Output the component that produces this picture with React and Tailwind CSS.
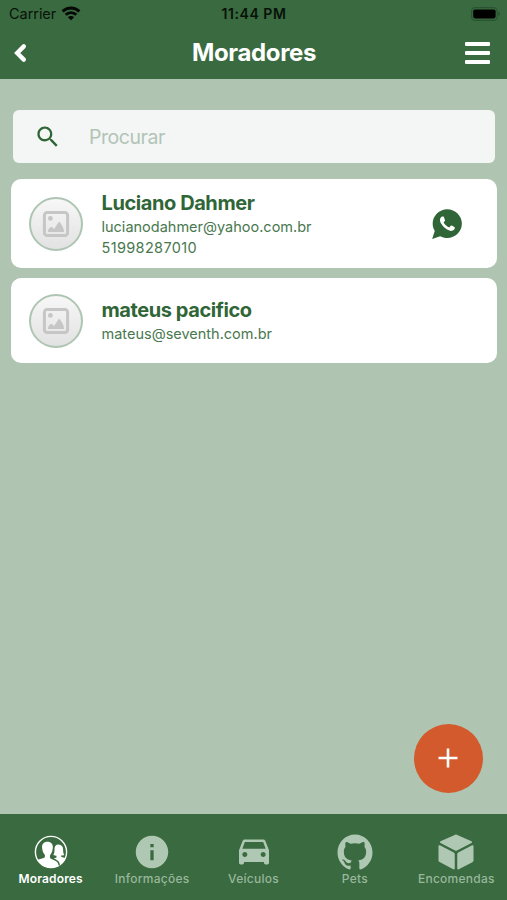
import {
  IoLogoGithub,
  IoLogoWhatsapp,
  IoMdCar,
  IoMdCube,
  IoMdInformationCircle,
  IoMdSearch,
} from "react-icons/io";

const residents = [
  {
    name: "Luciano Dahmer",
    email: "lucianodahmer@yahoo.com.br",
    phone: "51998287010",
  },
  {
    name: "mateus pacifico",
    email: "mateus@seventh.com.br",
  },
];

const PeopleIcon = ({ className }) => (
  <svg className={className} viewBox="0 0 40 40">
    <defs>
      <clipPath id="people-circle">
        <circle cx="20" cy="20" r="15.6" />
      </clipPath>
    </defs>
    <circle cx="20" cy="20" r="15.6" fill="none" stroke="currentColor" strokeWidth="1.4" />
    <g clipPath="url(#people-circle)" fill="currentColor">
      <path d="M27.6 12.6c-3 0-4.2 2.3-4.1 4.8.1 2.6-.5 4.4-1.2 5.6 1.2.6 2.4.7 3.2.7v1.7l-2.6 1.2 4.6 3 1.6 6H38V27l-7.400-2c-.6-.4-.6-1-.6-1.4 1 0 2.200-.1 3.300-.7-.8-1.200-1.200-3-1.200-5.500 0-2.600-1.500-4.800-4.500-4.800z" />
      <path d="M16.400 9.800c-3.700 0-5.700 2.500-5.300 6 .2 3 1 5.200 2.700 7 .3 1.700 0 2.700-1.100 3.200L4 28.400V38h23.800c.2-4-.4-6.600-2-8.200-1-1-3.600-2-5.800-3-1.200-.6-1.200-2.200-.8-3.800 1.600-1.800 2.400-4.400 2.600-7.200.4-3.500-1.800-6-5.400-6z" />
    </g>
    <path d="M21.600 26.600c3.200 1.300 5.200 2.100 6 3.600.6 1.100.8 2.200.8 3.600" fill="none" stroke="#3a6a3f" strokeWidth="1" />
  </svg>
);

const tabs = [
  { label: "Moradores", icon: PeopleIcon, active: true },
  { label: "Informações", icon: IoMdInformationCircle },
  { label: "Veículos", icon: IoMdCar },
  { label: "Pets", icon: IoLogoGithub },
  { label: "Encomendas", icon: IoMdCube },
];

const WifiIcon = () => (
  <svg width="20" height="15" viewBox="0 0 20 15" fill="none" stroke="#050805" strokeWidth="2.9">
    <path d="M1.6 5.4a12 12 0 0 1 16.8 0" />
    <path d="M4.7 8.8a7.5 7.5 0 0 1 10.6 0" />
    <path d="M10 14.2 6.9 11.3a4.4 4.4 0 0 1 6.2 0z" fill="#050805" stroke="none" />
  </svg>
);

const BatteryIcon = () => (
  <svg width="30" height="14" viewBox="0 0 30 14">
    <rect x="0.6" y="0.6" width="25.6" height="12.8" rx="3.6" fill="none" stroke="#2a5431" strokeWidth="1.2" />
    <rect x="2.2" y="2.4" width="22.4" height="9" rx="1.8" fill="#000" />
    <path d="M27.6 4.8v4.4c1.6-.6 1.6-3.8 0-4.4z" fill="#234a2a" />
  </svg>
);

const StatusBar = () => (
  <div className="grid h-[27px] grid-cols-3 items-center pr-1.5 pl-[9px] text-[#071209]">
    <div className="flex items-center gap-[5px] text-[14.5px] tracking-[-0.05px]">
      <span>Carrier</span>
      <WifiIcon />
    </div>
    <span className="pr-0.5 text-center text-[14px] font-semibold tracking-[0.55px]">11:44 PM</span>
    <div className="flex justify-end">
      <BatteryIcon />
    </div>
  </div>
);

const Header = () => (
  <header className="h-[79px] bg-[#3a6a3f]">
    <StatusBar />
    <div className="flex h-[52px] items-center justify-between pr-[17px] pl-3 text-white">
      <button type="button" aria-label="Voltar" className="w-[25px]">
        <svg
          width="16"
          height="20"
          viewBox="0 0 16 20"
          fill="none"
          stroke="currentColor"
          strokeWidth="4.4"
          strokeLinecap="round"
        >
          <path d="M11.8 3.4 5.2 10l6.600 6.600" />
        </svg>
      </button>
      <h1 className="pl-1.5 text-[24px] font-bold tracking-[-0.35px]">Moradores</h1>
      <button type="button" aria-label="Menu" className="flex flex-col gap-[5px]">
        <span className="h-1 w-[25px] rounded-[1px] bg-white" />
        <span className="h-1 w-[25px] rounded-[1px] bg-white" />
        <span className="h-1 w-[25px] rounded-[1px] bg-white" />
      </button>
    </div>
  </header>
);

const Avatar = () => (
  <div className="flex size-[54px] shrink-0 items-center justify-center rounded-full border-2 border-[#afc5b4] bg-gradient-to-b from-[#f7f7f7] to-[#e2e2e2]">
    <svg width="28" height="28" viewBox="0 0 28 28">
      <rect x="2.4" y="2.4" width="23.2" height="23.2" rx="2.8" fill="none" stroke="#c6c6c6" strokeWidth="3" />
      <circle cx="8.4" cy="8.4" r="2.4" fill="#c6c6c6" />
      <path d="M6 22c0-2.400 1-4 2.600-4.800 1.200-.6 1.800-.2 3.400 2l4-6.200c.8-1.200 1.600-1.200 2.400 0 2 3 3.600 5.600 3.600 9z" fill="#c6c6c6" />
    </svg>
  </div>
);

const ResidentCard = ({ name, email, phone }) => (
  <li
    className={
      phone
        ? "flex h-[89px] items-center rounded-[10px] bg-white pr-[33.5px] pl-[18px]"
        : "flex h-[85px] items-center rounded-[10px] bg-white pr-[33.5px] pl-[18px]"
    }
  >
    <Avatar />
    <div className="ml-[18.5px] flex-1 text-[14.5px] leading-[21px] text-[#49784f]">
      <p className="text-[20px] leading-[26px] font-bold tracking-[-0.42px] text-[#306637]">{name}</p>
      <p>{email}</p>
      {phone && <p className="tracking-[0.35px]">{phone}</p>}
    </div>
    {phone && <IoLogoWhatsapp className="size-[34px] text-[#306637]" />}
  </li>
);

const TabBar = () => (
  <nav className="flex h-[86px] bg-[#3a6a3f] pt-[18px]">
    {tabs.map(({ label, icon: Icon, active }) => (
      <a
        key={label}
        className={
          active
            ? "flex flex-1 flex-col items-center text-white"
            : "flex flex-1 flex-col items-center text-[#afc8b3]"
        }
      >
        <Icon className="size-10" />
        <span
          className={
            active
              ? "text-[12px] leading-[14px] font-semibold tracking-[0.15px]"
              : "text-[12px] leading-[14px] font-medium tracking-[0.25px] text-[#98b79c]"
          }
        >
          {label}
        </span>
      </a>
    ))}
  </nav>
);

export default function App() {
  return (
    <div className="flex h-[900px] w-full flex-col overflow-hidden bg-[#afc5b1] font-['Inter',sans-serif]">
      <Header />
      <main className="relative flex-1 pt-[31px] pr-2.5 pl-[11px]">
        <label className="mx-0.5 flex h-[53px] items-center rounded-md bg-[#f3f6f5] pl-[21px]">
          <IoMdSearch className="size-[27px] text-[#306637]" />
          <input
            type="text"
            placeholder="Procurar"
            className="ml-7 w-80 pt-0.5 text-[19.5px] tracking-[-0.45px] outline-none placeholder:text-[#b2c4b7]"
          />
        </label>
        <ul className="mt-4 flex flex-col gap-2.5">
          {residents.map((resident) => (
            <ResidentCard key={resident.email} {...resident} />
          ))}
        </ul>
        <button
          type="button"
          aria-label="Adicionar"
          className="absolute right-[24.5px] bottom-[21.5px] flex size-[69px] items-center justify-center rounded-full bg-[#d35a2d]"
        >
          <svg width="20" height="20" viewBox="0 0 20 20" stroke="#fff" strokeWidth="2.6">
            <path d="M10 .5v19M.5 10h19" />
          </svg>
        </button>
      </main>
      <TabBar />
    </div>
  );
}
